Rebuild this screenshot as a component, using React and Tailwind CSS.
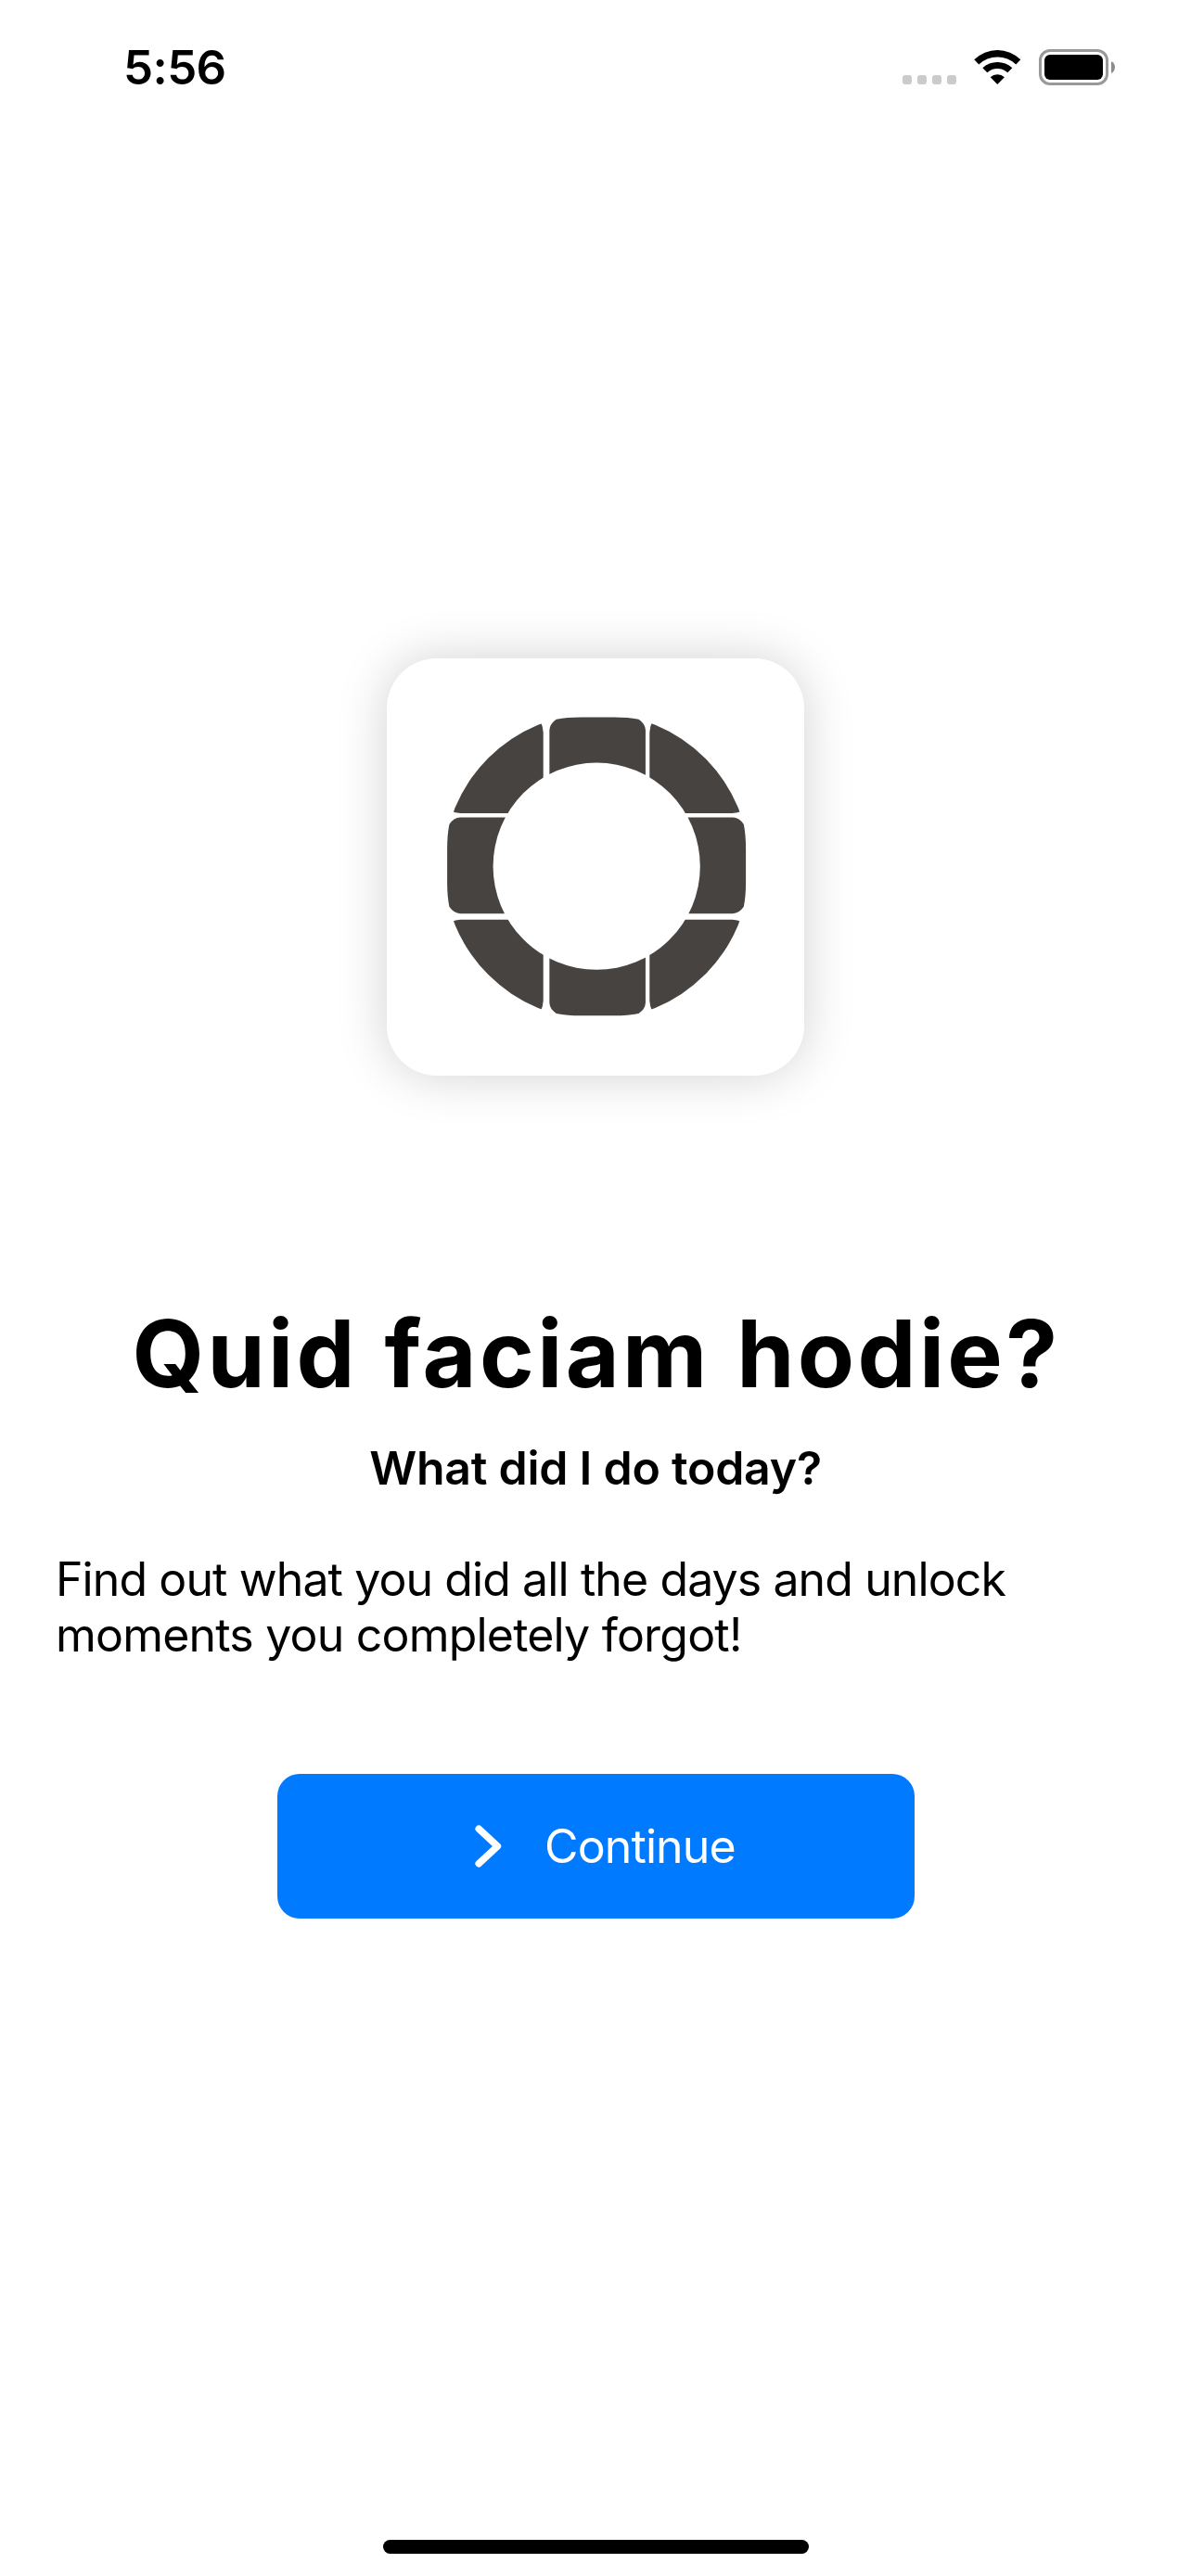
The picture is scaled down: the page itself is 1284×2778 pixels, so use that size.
import React from "react";

function SignalDots() {
  return (
    <div className="mt-[28px] flex gap-[6px]">
      {[0, 1, 2, 3].map((i) => (
        <span key={i} className="size-[10px] rounded-[3px] bg-[#cbcbcb]" />
      ))}
    </div>
  );
}

function WifiIcon() {
  return (
    <svg className="mt-px h-[38px] w-[51px]" viewBox="0 0 51 38" fill="#000">
      <path d="M0.3 10.3A35.5 35.5 0 0 1 50.3 10.3L45.3 15.5A29 29 0 0 0 5.3 15.5Z" />
      <path d="M9.3 19.2A23.5 23.5 0 0 1 41.3 19.2L36.3 24.3A16 16 0 0 0 14.3 24.3Z" />
      <path d="M17.7 29.3A11 11 0 0 1 32.9 29.3L25.3 37Z" />
    </svg>
  );
}

function BatteryIcon() {
  return (
    <svg className="h-[39px] w-[83px]" viewBox="0 0 83 39">
      <rect x="1.5" y="1.5" width="72" height="36" rx="10.5" fill="none" stroke="#999" strokeWidth="3" />
      <rect x="6" y="6" width="63" height="27" rx="6" fill="#000" />
      <path d="M78 13.2C80.6 14.3 82 16.8 82 19.5S80.6 24.9 78 26Z" fill="#8c8c8c" />
    </svg>
  );
}

function StatusBar() {
  return (
    <header className="flex h-[133px] items-start justify-between pl-[133px] pr-[81px]">
      <span className="mt-[43px] text-[51px] leading-[60px] font-semibold tracking-[-0.6px]">5:56</span>
      <div className="mt-[53px] flex items-start gap-[19px]">
        <SignalDots />
        <WifiIcon />
        <BatteryIcon />
      </div>
    </header>
  );
}

const SIDE_TILE =
  "M-51.8 -90V-147Q-51.5 -154 -44.4 -158.7Q-33 -161 -18 -161H18Q33 -161 44.4 -158.7Q51.5 -154 51.8 -147V-90Z";

/* Ring made of eight rounded tiles around a round hole */
function AppLogo() {
  return (
    <div className="size-[450px] rounded-[54px] bg-white shadow-[0_0_54px_rgba(0,0,0,0.18)]">
      <svg className="size-full" viewBox="0 0 450 450">
        <defs>
          <clipPath id="ring">
            <circle cx="226.2" cy="224.3" r="165.2" />
          </clipPath>
        </defs>
        <g fill="#474340">
          <g clipPath="url(#ring)">
            <path d="M62 60H160Q168 68 168.7 80V167H79.5Q68 166 62 159Z" />
            <path d="M390 60H292Q284 68 283.3 80V167H372.5Q384 166 390 159Z" />
            <path d="M62 389H160Q168 380.8 168.7 369V281.8H79.5Q68 282.8 62 289.5Z" />
            <path d="M390 389H292Q284 380.8 283.3 369V281.8H372.5Q384 282.8 390 289.5Z" />
          </g>
          <path d={SIDE_TILE} transform="translate(227.15 224.4)" />
          <path d={SIDE_TILE} transform="translate(227.15 224.3) rotate(180)" />
          <path d={SIDE_TILE} transform="translate(226.1 223.4) rotate(-90)" />
          <path d={SIDE_TILE} transform="translate(226.1 223.4) rotate(90)" />
        </g>
        <circle cx="226.2" cy="224.2" r="111.6" fill="#fff" />
      </svg>
    </div>
  );
}

function ContinueButton() {
  return (
    <button className="flex h-[156px] w-[687px] items-center rounded-[24px] bg-[#007aff] pl-[213px] text-[50px] leading-[60px] text-white">
      <svg className="h-[46px] w-[30px]" viewBox="0 0 30 46" fill="none" stroke="#fff" strokeWidth="7.5" strokeLinecap="round" strokeLinejoin="round">
        <path d="M4.2 4.2L24.4 23L4.2 41.8" />
      </svg>
      <span className="ml-[45px] tracking-[-0.88px]">Continue</span>
    </button>
  );
}

export default function App() {
  return (
    <div className="flex h-[2778px] w-[1284px] flex-col bg-white font-['Inter',sans-serif] text-black">
      <StatusBar />
      <main className="flex flex-1 flex-col items-center">
        <div className="mt-[576.5px]">
          <AppLogo />
        </div>
        <h1 className="mt-[240.5px] pl-[2px] text-[100px] leading-[120px] font-bold tracking-[3.35px] [word-spacing:1.5px]">
          Quid faciam hodie?
        </h1>
        <h2 className="mt-[33px] text-[50px] leading-[60px] font-semibold tracking-[-0.25px]">
          What did I do today?
        </h2>
        <p className="mt-[60px] w-full px-[60px] text-[50px] leading-[60px]">
          <span className="block tracking-[-0.9px]">Find out what you did all the days and unlock</span>
          <span className="block tracking-[-0.8px]">moments you completely forgot!</span>
        </p>
        <div className="mt-[120px] pl-px">
          <ContinueButton />
        </div>
      </main>
      <footer className="flex justify-center pl-px pb-[24px]">
        <div className="h-[15px] w-[459px] rounded-full bg-black" />
      </footer>
    </div>
  );
}
